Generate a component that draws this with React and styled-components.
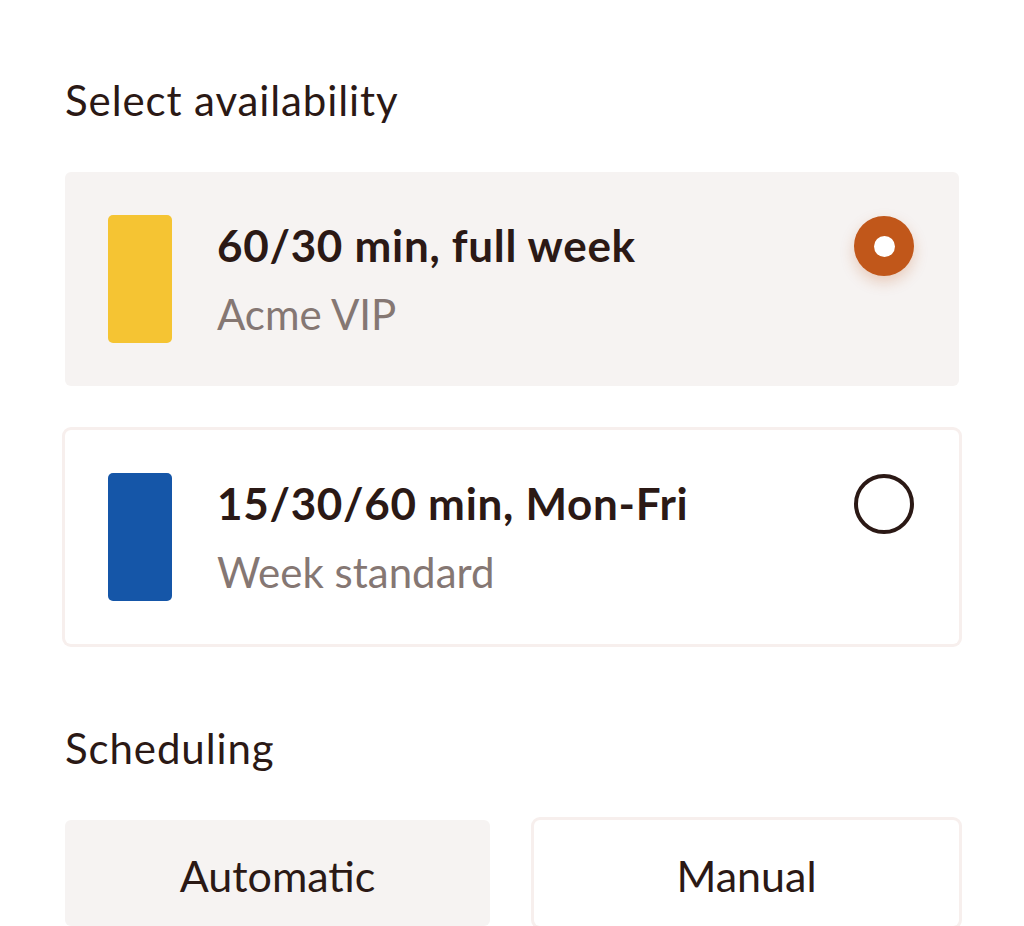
import React, { useState } from 'react';
import styled, { createGlobalStyle } from 'styled-components';

const GlobalStyle = createGlobalStyle`
  html, body {
    margin: 0;
    padding: 0;
    background: #ffffff;
  }
  body {
    font-family: Lato, "Noto Sans", sans-serif;
    color: #2b1915;
  }
`;

const Page = styled.div`
  padding: 72px 65px 0;
  display: flex;
  flex-direction: column;
`;

const SectionTitle = styled.h2`
  margin: 0 0 44px;
  font-size: 42px;
  font-weight: 400;
  letter-spacing: 0.9px;
  line-height: 56px;
  color: #2b1915;
`;

const OptionList = styled.div`
  display: flex;
  flex-direction: column;
  gap: 44px;
  margin-bottom: 76px;
`;

const OptionCard = styled.div`
  display: flex;
  align-items: center;
  height: 214px;
  box-sizing: border-box;
  padding: 0 45px 0 43px;
  border-radius: 6px;
  background: ${(p) => (p.$selected ? '#f6f3f2' : '#ffffff')};
  box-shadow: ${(p) => (p.$selected ? 'none' : '0 0 0 3px #f7efed')};
  cursor: pointer;
`;

const Swatch = styled.div`
  width: 64px;
  height: 128px;
  border-radius: 5px;
  background: ${(p) => p.$color};
  flex-shrink: 0;
`;

const OptionText = styled.div`
  flex: 1;
  display: flex;
  flex-direction: column;
  margin-left: 45px;
`;

const OptionName = styled.div`
  font-size: 44px;
  font-weight: 700;
  letter-spacing: 0.7px;
  line-height: 52px;
  color: #2b1915;
`;

const OptionSub = styled.div`
  font-size: 42px;
  font-weight: 400;
  line-height: 52px;
  margin-top: 17px;
  color: #857773;
`;

const Radio = styled.div`
  align-self: flex-start;
  margin-top: 44px;
  width: 60px;
  height: 60px;
  box-sizing: border-box;
  border-radius: 50%;
  flex-shrink: 0;
  display: flex;
  align-items: center;
  justify-content: center;
  background: ${(p) => (p.$checked ? '#c1571a' : 'transparent')};
  border: ${(p) => (p.$checked ? 'none' : '4px solid #2b1915')};
  box-shadow: ${(p) => (p.$checked ? '0 6px 14px rgba(193, 87, 26, 0.25)' : 'none')};
`;

const RadioDot = styled.div`
  width: 21px;
  height: 21px;
  border-radius: 50%;
  background: #ffffff;
`;

const ModeRow = styled.div`
  display: grid;
  grid-template-columns: 1fr 1fr;
  gap: 44px;
`;

const ModeButton = styled.button`
  height: 106px;
  padding: 4px 0 0;
  border: none;
  border-radius: 6px;
  font-family: Lato, "Noto Sans", sans-serif;
  font-size: 43px;
  color: #2b1915;
  background: ${(p) => (p.$active ? '#f6f3f2' : '#ffffff')};
  box-shadow: ${(p) => (p.$active ? 'none' : '0 0 0 3px #f7efed')};
  cursor: pointer;
`;

const options = [
  { id: 'vip', name: '60/30 min, full week', sub: 'Acme VIP', color: '#f5c433' },
  { id: 'std', name: '15/30/60 min, Mon-Fri', sub: 'Week standard', color: '#1556a8' },
];

export default function App() {
  const [selected, setSelected] = useState('vip');
  const [mode, setMode] = useState('auto');

  return (
    <>
      <GlobalStyle />
      <Page>
        <SectionTitle>Select availability</SectionTitle>
        <OptionList>
          {options.map((o) => (
            <OptionCard key={o.id} $selected={selected === o.id} onClick={() => setSelected(o.id)}>
              <Swatch $color={o.color} />
              <OptionText>
                <OptionName>{o.name}</OptionName>
                <OptionSub>{o.sub}</OptionSub>
              </OptionText>
              <Radio $checked={selected === o.id}>{selected === o.id && <RadioDot />}</Radio>
            </OptionCard>
          ))}
        </OptionList>
        <SectionTitle>Scheduling</SectionTitle>
        <ModeRow>
          <ModeButton $active={mode === 'auto'} onClick={() => setMode('auto')}>Automatic</ModeButton>
          <ModeButton $active={mode === 'manual'} onClick={() => setMode('manual')}>Manual</ModeButton>
        </ModeRow>
      </Page>
    </>
  );
}
